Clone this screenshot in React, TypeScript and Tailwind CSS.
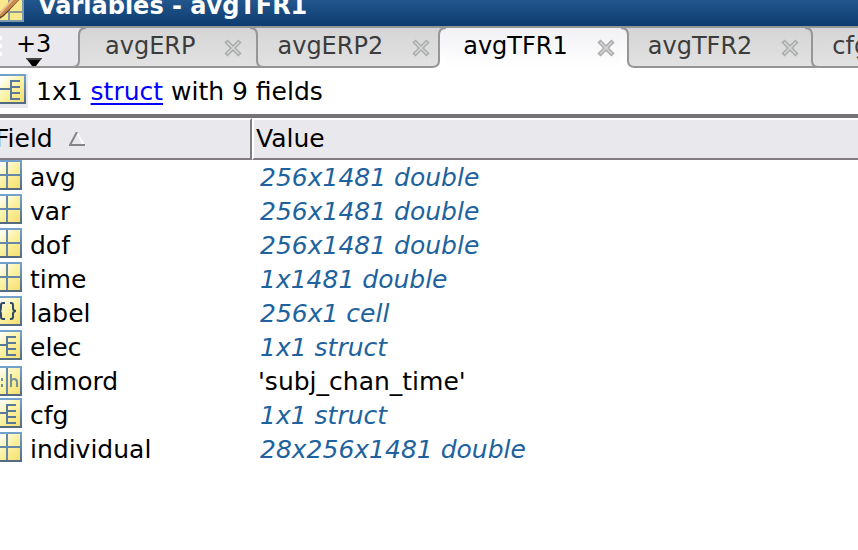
import React, { useState } from 'react';
import clsx from 'clsx';

type FieldKind = 'numeric' | 'cell' | 'struct' | 'char';

interface Field {
  name: string;
  value: string;
  kind: FieldKind;
}

interface Tab {
  name: string;
  className: string;
}

const tabs: Tab[] = [
  { name: 'avgERP', className: 'pl-[18px] pr-1.5' },
  { name: 'avgERP2', className: 'pl-3 pr-0' },
  { name: 'avgTFR1', className: 'pl-4 pr-1' },
  { name: 'avgTFR2', className: 'pl-3 pr-1' },
  { name: 'cfg', className: 'pl-3 pr-1' },
];

const fields: Field[] = [
  { name: 'avg', value: '256x1481 double', kind: 'numeric' },
  { name: 'var', value: '256x1481 double', kind: 'numeric' },
  { name: 'dof', value: '256x1481 double', kind: 'numeric' },
  { name: 'time', value: '1x1481 double', kind: 'numeric' },
  { name: 'label', value: '256x1 cell', kind: 'cell' },
  { name: 'elec', value: '1x1 struct', kind: 'struct' },
  { name: 'dimord', value: "'subj_chan_time'", kind: 'char' },
  { name: 'cfg', value: '1x1 struct', kind: 'struct' },
  { name: 'individual', value: '28x256x1481 double', kind: 'numeric' },
];

function IconDefs() {
  return (
    <svg className="absolute size-0" aria-hidden="true">
      <defs>
        <linearGradient id="cell-fill" x1="0" y1="0" x2="1" y2="1">
          <stop offset="0.15" stopColor="#fffef6" />
          <stop offset="0.5" stopColor="#fbf3a8" />
          <stop offset="1" stopColor="#f7df6c" />
        </linearGradient>
        <linearGradient id="cell-line" x1="0" y1="0" x2="0" y2="1">
          <stop offset="0" stopColor="#74a3cf" />
          <stop offset="1" stopColor="#536a80" />
        </linearGradient>
        <linearGradient id="tab-fill" x1="0" y1="0" x2="0" y2="1">
          <stop offset="0" stopColor="#d5d5d5" />
          <stop offset="1" stopColor="#e2e2e2" />
        </linearGradient>
        <linearGradient id="tab-active" x1="0" y1="0" x2="0" y2="1">
          <stop offset="0" stopColor="#f1f1f5" />
          <stop offset="0.85" stopColor="#ffffff" />
        </linearGradient>
      </defs>
    </svg>
  );
}

function FieldIcon({ kind }: { kind: FieldKind }) {
  return (
    <svg
      viewBox={kind === 'char' ? '0 -2 30 32' : '0 0 30 32'}
      className="h-8 w-[30px] shrink-0"
      fill="none"
      aria-hidden="true"
    >
      <rect x="0" y="0" width="30" height="30" fill="url(#cell-line)" />
      <rect x="2" y="2" width="26" height="26" fill="url(#cell-fill)" />
      {kind === 'numeric' && (
        <path d="M14 2h2v26h-2zM2 14h26v2H2z" fill="#6689a9" />
      )}
      {kind === 'struct' && (
        <path
          d="M2 15h12M24 7H15v18h9M15 13h9M15 19h9"
          stroke="#58799a"
          strokeWidth="2"
        />
      )}
      {kind === 'cell' && (
        <path
          d="M13 7h-2q-2 0-2 2v3q0 3-2 3 2 0 2 3v3q0 2 2 2h2M18 7h1q2 0 2 2v3q0 3 3 3-3 0-3 3v3q0 2-2 2h-1"
          stroke="#2f4a68"
          strokeWidth="2"
        />
      )}
      {kind === 'char' && (
        <>
          <path d="M14 2h2v26h-2z" fill="#6689a9" />
          <path d="M19 8v13M19 15q1-2 3-2 3 0 3 3v5" stroke="#75909a" strokeWidth="2" />
          <path d="M9 12h2v3H9zM9 18h2v3H9z" fill="#75909a" />
        </>
      )}
    </svg>
  );
}

function EditorIcon() {
  return (
    <svg viewBox="0 0 32 22" className="h-[22px] w-8 shrink-0" aria-hidden="true">
      <path d="M0 0h32v22H0z" fill="#7f99ad" />
      <path d="M0 0h30v20H0z" fill="#f8e98e" />
      <path d="M16 0h2v20h-2zM0 11h30v2H0z" fill="#8a9a94" />
      <path d="M4 19L21-2h8L12 16l-6 4z" fill="#5f3d2a" />
      <path d="M5 17L20-1h8L10 16z" fill="#c98a52" />
      <path d="M7 14L21-1" stroke="#efc08c" strokeWidth="2" />
    </svg>
  );
}

// One slanted border between two neighbouring tabs
function TabEdge({ left, right, rising }: { left: string; right: string; rising: boolean }) {
  const curve = rising
    ? 'M1 39Q8 39 8 33V7Q8 0 15 0'
    : 'M1 0Q8 0 8 7V33Q8 39 15 39';
  return (
    <svg viewBox="0 0 16 40" className="h-10 w-4 shrink-0" fill="none" aria-hidden="true">
      <rect width="16" height="40" fill={rising ? left : right} />
      <path
        d={rising ? 'M1 40Q8 39 8 33V7Q8 0 15 0H16V40z' : 'M0 0H1Q8 0 8 7V33Q8 39 15 40H0z'}
        fill={rising ? right : left}
      />
      {left !== 'url(#tab-active)' && <path d={rising ? 'M0 39h2' : 'M0 39h16'} stroke="#959595" strokeWidth="2" />}
      {right !== 'url(#tab-active)' && <path d={rising ? 'M0 39h16' : 'M14 39h2'} stroke="#959595" strokeWidth="2" />}
      <path d={curve} stroke="#969696" strokeWidth="2" />
    </svg>
  );
}

function CloseIcon() {
  return (
    <svg viewBox="0 0 20 20" className="size-5" fill="none" aria-hidden="true">
      <path d="M3 3l14 14M17 3L3 17" stroke="#a9abab" strokeWidth="4.5" />
      <path d="M4 4l12 12M16 4L4 16" stroke="#d6d7d7" strokeWidth="1.5" />
    </svg>
  );
}

export default function App() {
  const [active, setActive] = useState('avgTFR1');
  const activeIndex = tabs.findIndex((t) => t.name === active);

  function fillOf(index: number) {
    if (index < 0) return '#e9e8ec';
    return index === activeIndex ? 'url(#tab-active)' : 'url(#tab-fill)';
  }

  return (
    <div className="min-h-screen overflow-hidden bg-white font-['DejaVu_Sans',sans-serif] text-[25px] text-black">
      <IconDefs />

      <header className="flex h-[26px] items-start gap-3.5 overflow-hidden bg-linear-to-b from-[#22568d] to-[#0d3c70]">
        <div className="-ml-2">
          <EditorIcon />
        </div>
        <h1 className="-mt-2 text-2xl leading-7 font-bold whitespace-nowrap text-white">Variables - avgTFR1</h1>
      </header>

      <nav className="flex h-[42px] overflow-hidden border-t-2 border-[#969696] bg-[#e9e8ec] text-2xl">
        <div className="flex w-[71px] shrink-0 border-b-2 border-[#959595]">
          <div className="flex w-0.5 flex-col gap-1 pt-2">
            <span className="h-1 bg-white" />
            <span className="h-1 bg-white" />
            <span className="h-1 bg-white" />
          </div>
          <button className="flex flex-col items-center pt-0.5 pl-3.5 leading-7" aria-label="+3">
            <span>+3</span>
            <svg viewBox="0 0 16 8" className="h-2 w-4 shrink-0" aria-hidden="true">
              <path d="M0 0h16L10 8H6z" fill="#000" />
              <path d="M0 0h16l-1 2H1z" fill="#444" />
            </svg>
          </button>
        </div>

        {tabs.map((tab, i) => (
          <React.Fragment key={tab.name}>
            <TabEdge
              left={fillOf(i - 1)}
              right={fillOf(i)}
              rising={i === 0 || i === activeIndex}
            />
            <div
              className={clsx(
                'flex shrink-0 items-start gap-7 bg-linear-to-b pt-1',
                tab.className,
                i === activeIndex
                  ? 'from-[#f1f1f5] to-white'
                  : 'border-b-2 border-[#959595] from-[#d5d5d5] to-[#e2e2e2] text-[#3c3c3c]'
              )}
            >
              <button className="leading-7" onClick={() => setActive(tab.name)}>
                {tab.name}
              </button>
              <button className="pt-1.5" aria-label={`Close ${tab.name}`}>
                <CloseIcon />
              </button>
            </div>
          </React.Fragment>
        ))}
      </nav>

      <main>
        <div className="-ml-1 flex items-start gap-2 pt-1.5 pb-1.5">
          <div className="h-[34px] bg-[#e9e8ec] pr-0.5">
            <FieldIcon kind="struct" />
          </div>
          <p className="pt-0.5 leading-8 whitespace-nowrap">
            1x1{' '}
            <a href="#struct" className="text-[#0000ff] underline decoration-2 underline-offset-3">
              struct
            </a>{' '}
            with 9 fields
          </p>
        </div>

        <div className="-ml-2 border-t-4 border-[#747274]">
          <table className="w-full table-fixed border-separate border-spacing-0 text-left">
            <colgroup>
              <col className="w-[260px]" />
              <col />
            </colgroup>
            <thead>
              <tr className="bg-[#e9e8ec]">
                <th className="border-t-2 border-r-2 border-b-2 border-t-white border-r-[#807c80] border-b-[#807c80] p-0 pl-[3px] font-normal">
                  <div className="flex h-[38px] items-center gap-4">
                    <span>Field</span>
                    <svg viewBox="0 0 16 14" className="h-3.5 w-4" fill="none" aria-hidden="true">
                      <path d="M8 1l7 12" stroke="#fff" strokeWidth="2" />
                      <path d="M8 0L1 13h15" stroke="#858385" strokeWidth="2" />
                    </svg>
                  </div>
                </th>
                <th className="border-t-2 border-b-2 border-l-2 border-t-white border-b-[#807c80] border-l-white p-0 pl-0.5 font-normal">
                  Value
                </th>
              </tr>
            </thead>
            <tbody>
              {fields.map((field) => (
                <tr key={field.name} className="h-[34px] align-top leading-8">
                  <td className="p-0">
                    <div className="flex h-[34px] items-start gap-2">
                      <FieldIcon kind={field.kind} />
                      <span className="pt-0.5">{field.name}</span>
                    </div>
                  </td>
                  <td
                    className={clsx(
                      'p-0 pt-0.5 whitespace-nowrap',
                      field.kind === 'char' ? 'pl-1.5' : 'pl-2 text-[#20629e] italic'
                    )}
                  >
                    {field.value}
                  </td>
                </tr>
              ))}
            </tbody>
          </table>
        </div>
      </main>
    </div>
  );
}
